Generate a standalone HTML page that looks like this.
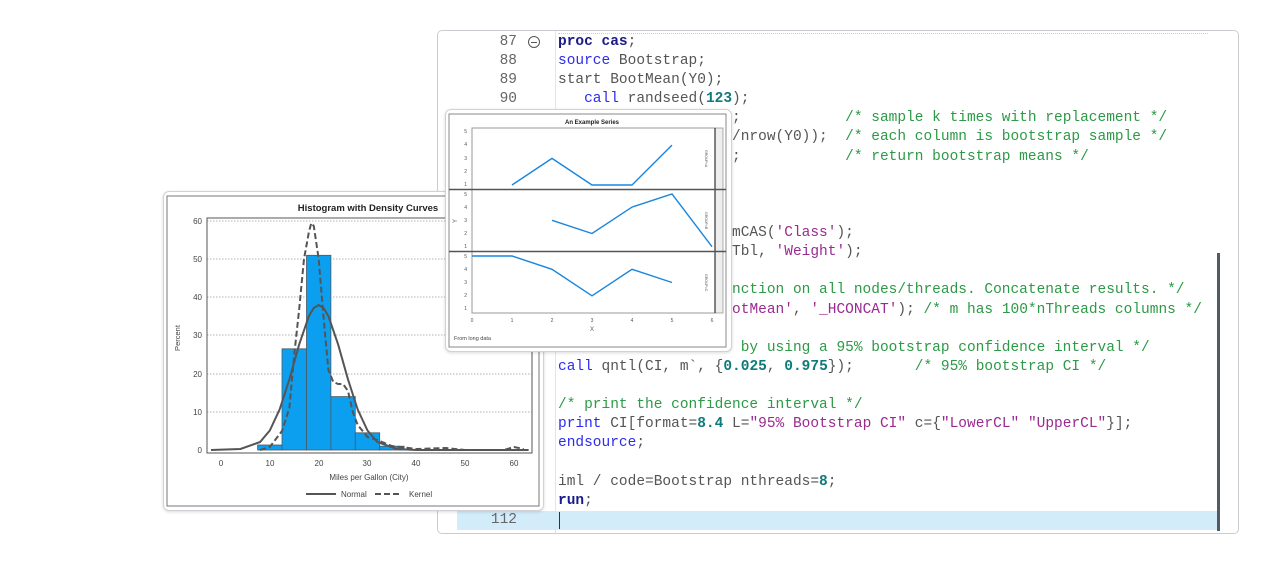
<!DOCTYPE html>
<html><head><meta charset="utf-8"><style>
html,body{margin:0;padding:0;background:#fff;width:1280px;height:561px;overflow:hidden;position:relative;font-family:"Liberation Sans",sans-serif}
#ed{position:absolute;left:437px;top:30px;width:800px;height:502px;border:1px solid #c9cdd2;border-radius:5px;background:#fff}
.ln{position:absolute;left:0;width:79px;text-align:right;font:14.5px/19px "Liberation Mono",monospace;color:#666}
.cl{position:absolute;left:120px;white-space:pre;font:14.5px/19px "Liberation Mono",monospace;color:#555}
.k{color:#1a1a8a;font-weight:bold}.b{color:#2b2bf0}.n{color:#0f7a7a;font-weight:bold}.s{color:#9a2a90}.c{color:#2c9a46}
.panel{position:absolute;background:#fff;border:1px solid #cfd3d7;border-radius:6px;box-shadow:0 1px 3px rgba(0,0,0,.15)}
svg text{font-family:"Liberation Sans",sans-serif}
</style></head><body>
<div id="ed">
 <div style="position:absolute;left:120px;top:2px;width:650px;border-top:1px dotted #ccc"></div>
 <div style="position:absolute;left:117px;top:0;bottom:0;border-left:1px solid #e3e6e9"></div>
 <div style="position:absolute;left:19px;top:480px;width:762px;height:19px;background:#d3ecfa"></div>
 <div style="position:absolute;left:121px;top:481px;width:1px;height:17px;background:#333"></div>
 <div style="position:absolute;left:779px;top:222px;width:3px;height:278px;background:#525b63"></div>
 <div class="ln" style="top:2px">87</div><div class="ln" style="top:21px">88</div><div class="ln" style="top:40px">89</div><div class="ln" style="top:59px">90</div><div class="ln" style="top:480px">112</div>
 <div style="position:absolute;left:90px;top:5px;width:10px;height:10px;border:1px solid #555;border-radius:50%"></div>
 <div style="position:absolute;left:93px;top:11px;width:6px;height:1px;background:#555"></div>
 <div class="cl" style="top:2px"><span class="k">proc cas</span>;</div>
 <div class="cl" style="top:21px"><span class="b">source</span> Bootstrap;</div>
 <div class="cl" style="top:40px">start BootMean(Y0);</div>
 <div class="cl" style="top:59px">   <span class="b">call</span> randseed(<span class="n">123</span>);</div>
 <div class="cl" style="top:78px">   x = sample(Y0, k);            <span class="c">/* sample k times with replacement */</span></div>
 <div class="cl" style="top:97px">   s = x[+, ]       /nrow(Y0));  <span class="c">/* each column is bootstrap sample */</span></div>
 <div class="cl" style="top:117px">   return s`        ;            <span class="c">/* return bootstrap means */</span></div>
 <div class="cl" style="top:136px">finish;</div>
 <div class="cl" style="top:193px">   Y0 = ReadNumFroa mCAS(<span class="s">'Class'</span>);</div>
 <div class="cl" style="top:212px">   w = ColumnFrom   Tbl, <span class="s">'Weight'</span>);</div>
 <div class="cl" style="top:250px"><span class="c">/* Call BootMean fu nction on all nodes/threads. Concatenate results. */</span></div>
 <div class="cl" style="top:270px">   m = MapReduce(<span class="s">'Bo</span><span class="s">otMean'</span>, <span class="s">'_HCONCAT'</span>); <span class="c">/* m has 100*nThreads columns */</span></div>
 <div class="cl" style="top:308px"><span class="c">/* summarize results by using a 95% bootstrap confidence interval */</span></div>
 <div class="cl" style="top:327px"><span class="b">call</span> qntl(CI, m`, {<span class="n">0.025</span>, <span class="n">0.975</span>});       <span class="c">/* 95% bootstrap CI */</span></div>
 <div class="cl" style="top:365px"><span class="c">/* print the confidence interval */</span></div>
 <div class="cl" style="top:384px"><span class="b">print</span> CI[format=<span class="n">8.4</span> L=<span class="s">"95% Bootstrap CI"</span> c={<span class="s">"LowerCL"</span> <span class="s">"UpperCL"</span>}];</div>
 <div class="cl" style="top:403px"><span class="b">endsource</span>;</div>
 <div class="cl" style="top:442px">iml / code=Bootstrap nthreads=<span class="n">8</span>;</div>
 <div class="cl" style="top:461px"><span class="k">run</span>;</div>
</div>

<div class="panel" style="left:163px;top:191px;width:379px;height:318px"></div>
<svg style="position:absolute;left:0;top:0" width="1280" height="561">
 <rect x="167" y="196" width="372" height="310" fill="#fff" stroke="#777" stroke-width="1"/>
 <text x="368" y="211" font-size="9.5" font-weight="bold" text-anchor="middle" fill="#222">Histogram with Density Curves</text>
 <g stroke="#999" stroke-dasharray="1.5,1.5" stroke-width="0.8">
  <line x1="207" y1="221" x2="532" y2="221"/><line x1="207" y1="259" x2="532" y2="259"/><line x1="207" y1="297" x2="532" y2="297"/><line x1="207" y1="335" x2="532" y2="335"/><line x1="207" y1="374" x2="532" y2="374"/><line x1="207" y1="412" x2="532" y2="412"/>
 </g>
 <g fill="#0c9ff0" stroke="#4a5a66" stroke-width="0.8">
  <rect x="257.6" y="445" width="24.4" height="5"/><rect x="282" y="348.8" width="24.5" height="101.2"/><rect x="306.5" y="255.3" width="24.4" height="194.7"/><rect x="330.9" y="396.6" width="24.4" height="53.4"/><rect x="355.3" y="432.8" width="24.4" height="17.2"/><rect x="379.7" y="446.2" width="24.4" height="3.8"/>
 </g>
 <polyline fill="none" stroke="#555" stroke-width="2" points="211,450 240.5,449 260.1,442 269.8,430.5 279.6,409.5 289.4,379.4 299.1,344.7 308.9,316 313.8,308 318.7,305 323.5,308 328.4,316 338.2,344.7 348,379.4 357.7,409.5 367.5,430.5 377.3,442 396.8,449 416.3,450 528.6,450"/>
 <polyline fill="none" stroke="#555" stroke-width="2" stroke-dasharray="6,3" points="260.1,450 269.8,447 282,431 289.4,408 294.2,355 299.1,310 304,259 308.9,232 311.3,223 313.8,226 318.7,259 323.5,317 328.4,370 333.3,382 338.2,384 343.1,384 348,391 352.8,412 357.7,425 367.5,437 377.3,440 391.9,446 416.3,449 445.6,448 465,450 504,450 514,447 523.7,449"/>
 <rect x="207" y="218" width="325" height="235" fill="none" stroke="#555" stroke-width="1"/>
 <g font-size="8" fill="#444" text-anchor="end">
  <text x="202" y="224">60</text><text x="202" y="262">50</text><text x="202" y="300">40</text><text x="202" y="338">30</text><text x="202" y="377">20</text><text x="202" y="415">10</text><text x="202" y="453">0</text>
 </g>
 <g font-size="8" fill="#444" text-anchor="middle">
  <text x="221" y="466">0</text><text x="270" y="466">10</text><text x="319" y="466">20</text><text x="367" y="466">30</text><text x="416" y="466">40</text><text x="465" y="466">50</text><text x="514" y="466">60</text>
  <text x="369" y="480">Miles per Gallon (City)</text>
 </g>
 <text x="180" y="338" font-size="7.5" fill="#444" text-anchor="middle" transform="rotate(-90 180 338)">Percent</text>
 <line x1="306" y1="494" x2="336" y2="494" stroke="#555" stroke-width="2"/>
 <text x="341" y="497" font-size="8" fill="#444">Normal</text>
 <line x1="375" y1="494" x2="402" y2="494" stroke="#555" stroke-width="2" stroke-dasharray="6,3"/>
 <text x="409" y="497" font-size="8" fill="#444">Kernel</text>
</svg>

<div class="panel" style="left:445px;top:109px;width:285px;height:241px"></div>
<svg style="position:absolute;left:0;top:0" width="1280" height="561">
 <rect x="449" y="114" width="277" height="233" fill="#fff" stroke="#888" stroke-width="1"/>
 <text x="592" y="124" font-size="6" font-weight="bold" text-anchor="middle" fill="#222">An Example Series</text>
 <rect x="472" y="128" width="243" height="185" fill="none" stroke="#999" stroke-width="1"/>
 <rect x="715" y="128" width="8" height="185" fill="#eee" stroke="#999" stroke-width="0.8"/>
 <line x1="715" y1="128" x2="715" y2="313" stroke="#333" stroke-width="1.2"/>
 <line x1="449" y1="189.5" x2="726" y2="189.5" stroke="#555" stroke-width="1.5"/>
 <line x1="449" y1="251.5" x2="726" y2="251.5" stroke="#555" stroke-width="1.5"/>
 <g font-size="3.5" fill="#555">
  <text x="720" y="165" transform="rotate(90 720 150)">GROUP=A</text>
  <text x="720" y="227" transform="rotate(90 720 212)">GROUP=B</text>
  <text x="720" y="289" transform="rotate(90 720 274)">GROUP=C</text>
 </g>
 <g font-size="5" fill="#555" text-anchor="end">
  <text x="467" y="133">5</text><text x="467" y="146">4</text><text x="467" y="160">3</text><text x="467" y="173">2</text><text x="467" y="186">1</text>
  <text x="467" y="196">5</text><text x="467" y="209">4</text><text x="467" y="222">3</text><text x="467" y="235">2</text><text x="467" y="248">1</text>
  <text x="467" y="258">5</text><text x="467" y="271">4</text><text x="467" y="284">3</text><text x="467" y="297">2</text><text x="467" y="310">1</text>
 </g>
 <g font-size="5" fill="#555" text-anchor="middle">
  <text x="472" y="322">0</text><text x="512" y="322">1</text><text x="552" y="322">2</text><text x="592" y="322">3</text><text x="632" y="322">4</text><text x="672" y="322">5</text><text x="712" y="322">6</text>
 </g>
 <text x="592" y="331" font-size="6" fill="#555" text-anchor="middle">X</text>
 <text x="457" y="221" font-size="6" fill="#555" text-anchor="middle" transform="rotate(-90 457 221)">Y</text>
 <text x="454" y="340" font-size="5.5" fill="#444">From long data</text>
 <g fill="none" stroke="#1a86dc" stroke-width="1.4">
  <polyline points="512,185 552,158.4 592,185 632,185 672,145.1"/>
  <polyline points="552,220.3 592,233.5 632,207.1 672,193.9 712,246.7"/>
  <polyline points="472,256 512,256 552,269.3 592,295.8 632,269.3 672,282.5"/>
 </g>
</svg>
</body></html>
